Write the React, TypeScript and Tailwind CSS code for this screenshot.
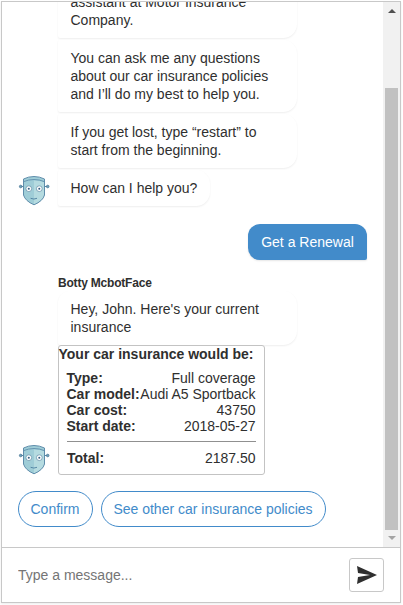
import type { ReactNode } from "react";

const details = [
  ["Type:", "Full coverage"],
  ["Car model:", "Audi A5 Sportback"],
  ["Car cost:", "43750"],
  ["Start date:", "2018-05-27"],
];

function Avatar() {
  return (
    <svg className="block h-[30px] w-8 shrink-0" viewBox="0 0 32 30">
      <path d="M2 10.500h4M26 10.500h4" stroke="#5b87a5" strokeWidth="1" />
      <circle cx="2.700" cy="10.500" r="1.300" fill="#6f9fb8" stroke="#4a7898" strokeWidth=".8" />
      <circle cx="29.700" cy="10.500" r="1.300" fill="#6f9fb8" stroke="#4a7898" strokeWidth=".8" />
      <path
        d="M5.500 3Q10.500 .500 16 .500Q21.500 .500 26.500 3L26.500 19Q25 25 16 28.800Q7.200 25 5.500 19Z"
        fill="#9fcdd7"
      />
      <path d="M16 4.500Q21.500 4.500 26.500 6L26.500 19Q25 25 16 28.800Z" fill="#b5dbe0" />
      <path
        d="M5.500 3Q10.500 .500 16 .500Q21.500 .500 26.500 3L26.500 19Q25 25 16 28.800Q7.200 25 5.500 19Z"
        fill="none"
        stroke="#5f8dab"
        strokeWidth="1"
      />
      <path d="M5.500 5.700Q10.500 3.500 16 3.500T26.500 5.700" fill="none" stroke="#5f8dab" strokeWidth=".9" />
      <circle cx="10.800" cy="12.700" r="2.900" fill="#fff" stroke="#6a94ac" strokeWidth=".8" />
      <circle cx="21.300" cy="12.700" r="2.900" fill="#fff" stroke="#6a94ac" strokeWidth=".8" />
      <circle cx="10.800" cy="12.700" r="1.050" fill="#365f83" />
      <circle cx="21.300" cy="12.700" r="1.050" fill="#365f83" />
      <path d="M12.600 22.300Q16 23.800 19 22.300" fill="none" stroke="#4d7f9f" strokeWidth=".9" />
    </svg>
  );
}

function Bubble({ children, shape }: { children: ReactNode; shape: string }) {
  return (
    <div className={`bg-white px-[12.5px] py-[9px] shadow-[0_1px_2px_rgba(0,0,0,0.07)] ${shape}`}>
      {children}
    </div>
  );
}

export default function App() {
  return (
    <div className="h-[605px] w-[403px] overflow-hidden bg-white pt-px pl-px font-['Liberation_Sans',Arial,sans-serif] text-[14px] leading-[18px] text-[#2f2f2f]">
      <div className="flex h-[602px] w-[400px] flex-col border border-[#c8c8c8] shadow-[0_1px_2px_rgba(0,0,0,0.08)]">
        <div className="flex h-[545px] shrink-0">
          <div className="flex w-[381px] flex-col justify-end overflow-hidden pr-4 pb-5 pl-4 whitespace-nowrap">
            <div className="flex shrink-0 items-end gap-2">
              <Avatar />
              <div className="flex flex-col gap-0.5">
                <Bubble shape="w-[239px] rounded-[2px_14px_14px_2px]">
                  assistant at Motor Insurance
                  <br />
                  Company.
                </Bubble>
                <Bubble shape="w-[239px] rounded-[2px_14px_14px_2px]">
                  You can ask me any questions
                  <br />
                  about our car insurance policies
                  <br />
                  and I’ll do my best to help you.
                </Bubble>
                <Bubble shape="w-[239px] rounded-[2px_14px_14px_2px]">
                  If you get lost, type “restart” to
                  <br />
                  start from the beginning.
                </Bubble>
                <Bubble shape="w-fit rounded-[2px_14px_14px_2px]">How can I help you?</Bubble>
              </div>
            </div>

            <div className="mt-[18px] h-9 w-[119px] shrink-0 self-end rounded-[12px_12px_2px_12px] bg-[#428bca] py-[9px] text-center text-white shadow-[0_1px_2px_rgba(0,0,0,0.1)]">
              Get a Renewal
            </div>

            <div className="mt-[14px] ml-10 h-[17px] shrink-0 text-[12px] leading-[18px] font-bold tracking-[-0.2px]">
              Botty McbotFace
            </div>
            <div className="flex shrink-0 items-end gap-2">
              <Avatar />
              <div>
                <Bubble shape="w-[239px] rounded-[12px_14px_14px_2px]">
                  Hey, John. Here's your current
                  <br />
                  insurance
                </Bubble>
                <div className="relative h-[130px] w-[207px] rounded-[3px] border border-[#c3c3c3] bg-white leading-4">
                  <div className="-ml-[0.5px] font-bold">Your car insurance would be:</div>
                  <div className="mt-2 mr-[8.5px] ml-2">
                    {details.map(([label, value]) => (
                      <div key={label} className="flex justify-between">
                        <b className="-ml-[0.5px]">{label}</b>
                        <span>{value}</span>
                      </div>
                    ))}
                    <hr className="my-[7px] border-t border-[#909090]" />
                    <div className="flex justify-between pt-px">
                      <b>Total:</b>
                      <span>2187.50</span>
                    </div>
                  </div>
                </div>
              </div>
            </div>

            <div className="mt-4 flex shrink-0 gap-2">
              <button className="h-9 w-[75px] rounded-full border border-[#428bca] pr-px text-[#428bca]">
                Confirm
              </button>
              <button className="h-9 w-[225px] rounded-full border border-[#428bca] pr-px text-[#428bca]">
                See other car insurance policies
              </button>
            </div>
          </div>

          <div className="flex w-[17px] flex-col items-center bg-[#f1f1f1]">
            <div className="flex h-[86px] w-full justify-center pt-[7px]">
              <svg className="h-1 w-2" viewBox="0 0 8 4">
                <path d="M4 0L8 4H0Z" fill="#505050" />
              </svg>
            </div>
            <div className="h-[442px] w-[13px] bg-[#c1c1c1]" />
            <svg className="mt-[6px] h-1 w-2" viewBox="0 0 8 4">
              <path d="M0 0H8L4 4Z" fill="#a3a3a3" />
            </svg>
          </div>
        </div>

        <div className="flex flex-1 items-center justify-between border-t border-[#c8c8c8] pr-4 pl-4">
          <input
            className="w-[300px] bg-transparent outline-none placeholder:text-[#757575]"
            placeholder="Type a message..."
          />
          <button className="flex h-[34px] w-[35px] items-center justify-center rounded-[3px] border border-[#c8c8c8]">
            <svg className="h-[18px] w-5" viewBox="0 0 20 18">
              <path d="M0 0L20 9L0 18L1 11L13 9L1 7Z" fill="#2f2f2f" />
            </svg>
          </button>
        </div>
      </div>
    </div>
  );
}
